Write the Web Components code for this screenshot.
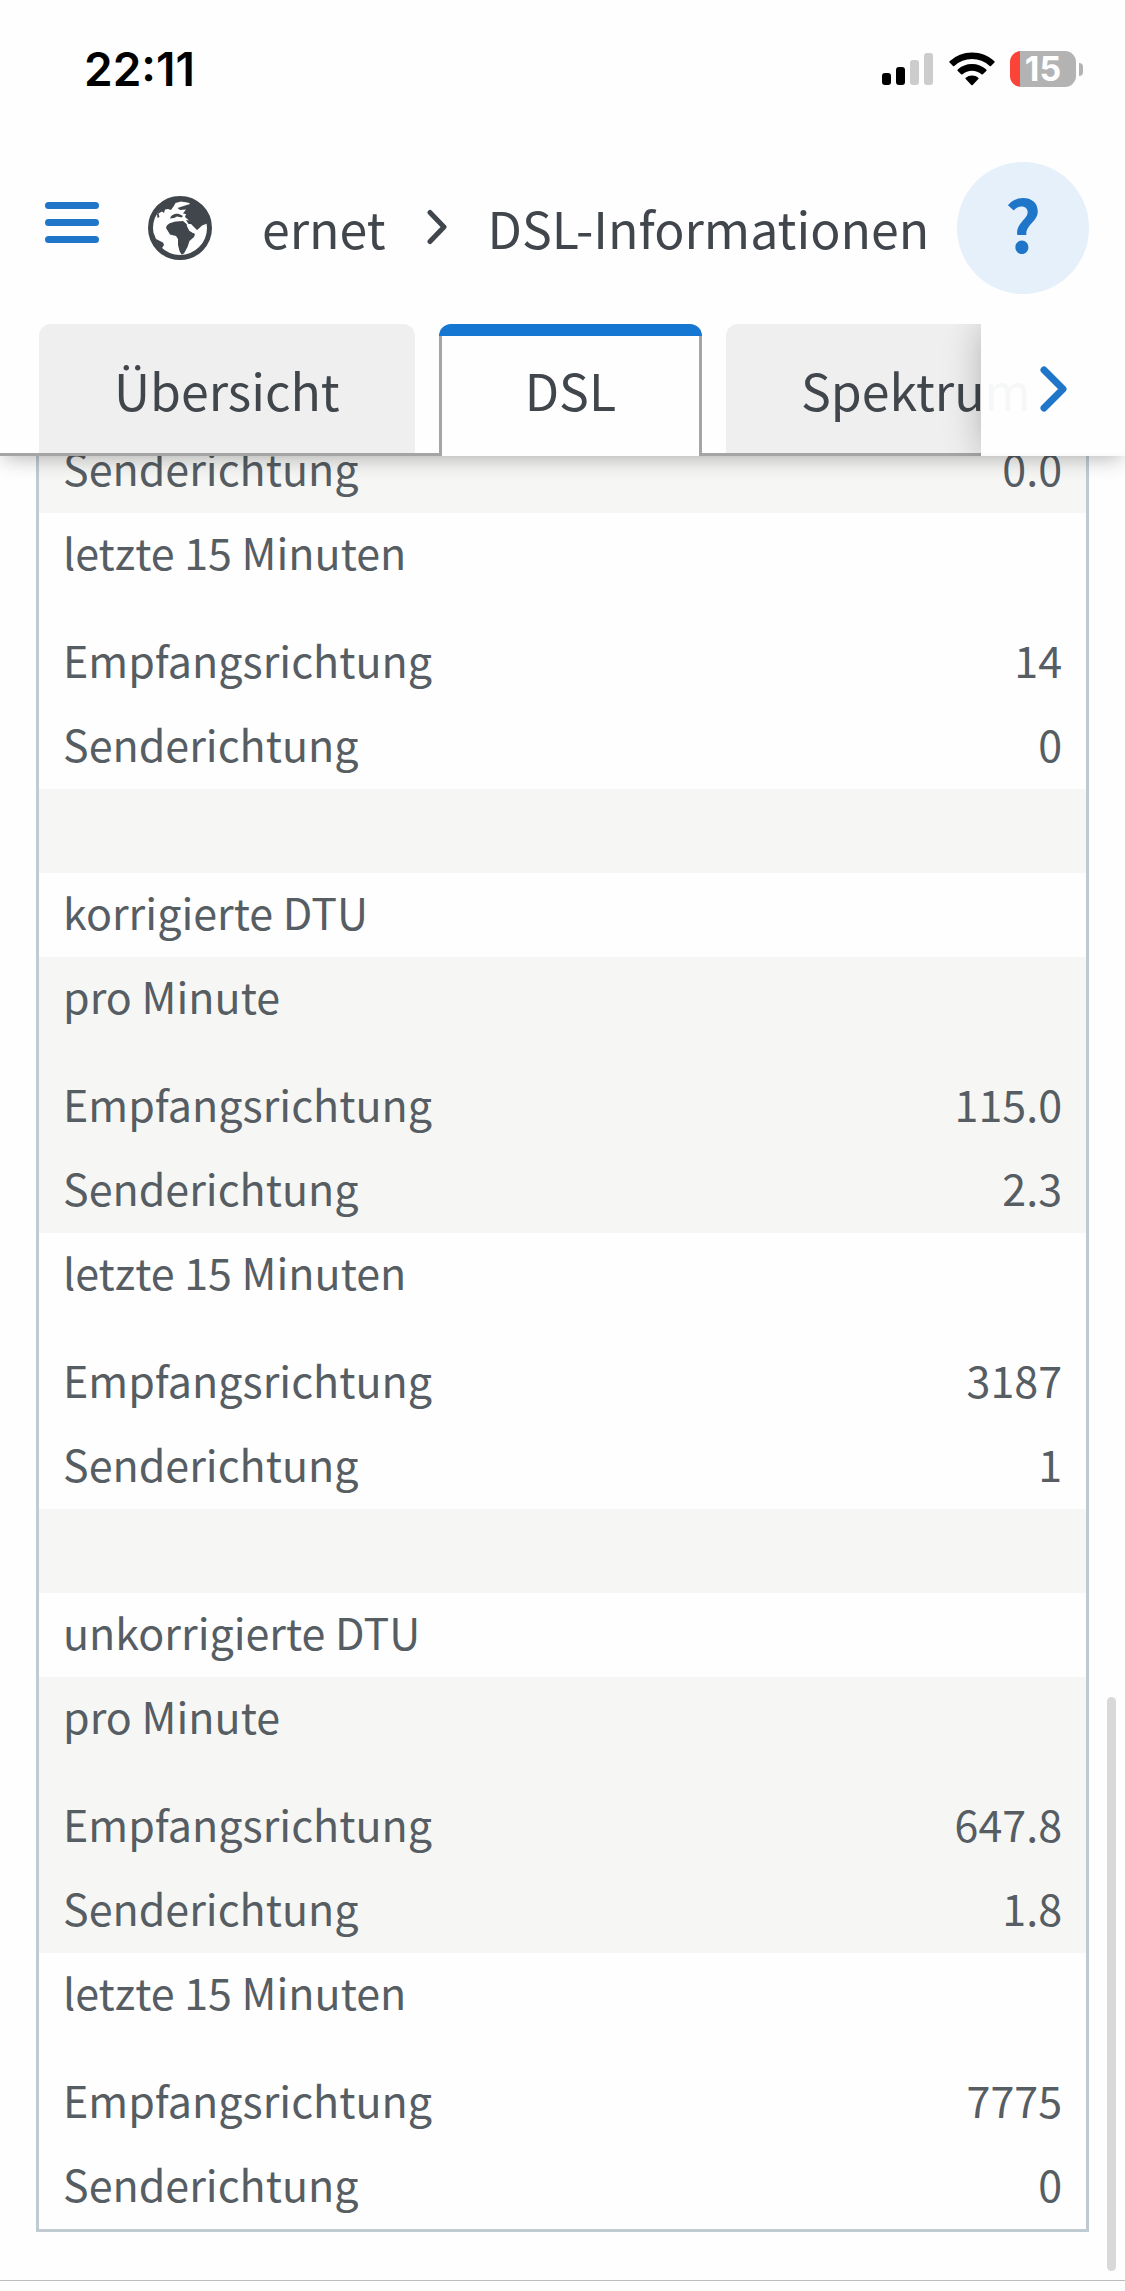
<!DOCTYPE html>
<html lang="de">
<head>
<meta charset="utf-8">
<meta name="viewport" content="width=device-width, initial-scale=1">
<title>DSL-Informationen</title>
<style>
  html, body { margin: 0; height: 100%; }
  body {
    background: #fefefe;
    font-family: "Noto Sans CJK SC", "Open Sans", sans-serif;
    --ink: #40464b;
    --ink-soft: #565d63;
    --blue: #1f76c9;
    --line: #a5a5a5;
    --frame: #c0cbd1;
    --stripe: #f6f7f5;
    --paper: #fefefe;
  }
</style>
</head>
<body>
<dsl-app></dsl-app>
<script>
const define = (name, html, setup) => {
  const template = document.createElement('template');
  template.innerHTML = html;
  customElements.define(name, class extends HTMLElement {
    constructor() {
      super();
      this.attachShadow({ mode: 'open' }).append(template.content.cloneNode(true));
    }
    connectedCallback() { if (setup) setup(this, this.shadowRoot); }
  });
};

define('status-bar', `
  <style>
    :host { display: flex; align-items: center; justify-content: space-between; height: 138px; padding: 0 42px 0 84px; color: #000; font-family: Inter, sans-serif; }
    time { font-size: 46px; line-height: 60px; font-weight: 600; }
    .icons { display: flex; align-items: center; gap: 15px; }
    svg { display: block; }
    .battery { display: flex; align-items: center; gap: 3px; }
    .cell { display: flex; align-items: center; justify-content: center; width: 66px; height: 36px; border-radius: 11px; background: linear-gradient(90deg, #fc4338 10px, #b3b3b3 10px); color: #fff; font-size: 34px; line-height: 36px; font-weight: 700; }
    .tip { width: 4px; height: 13px; border-radius: 0 4px 4px 0; background: #b3b3b3; }
  </style>
  <time>22:11</time>
  <div class="icons">
    <svg width="52" height="32" viewBox="0 0 52 32" aria-label="Mobilfunk">
      <rect x="0" y="20" width="9" height="12" rx="3"/>
      <rect x="14" y="14" width="9" height="18" rx="3"/>
      <rect x="28" y="7" width="9" height="25" rx="3" fill="#ccc"/>
      <rect x="42" y="0" width="9" height="32" rx="3" fill="#ccc"/>
    </svg>
    <svg width="46" height="34" viewBox="0 0 46 34" aria-label="WLAN">
      <path d="M23 0.5C31.600 0.500 39.500 3.700 45.400 9.200Q46 9.900 45.400 10.500L42 14Q41.300 14.500 40.700 14A26 26 0 0 0 5.300 14Q4.700 14.500 4 14L.6 10.500Q0 9.900 .6 9.200A33 33 0 0 1 23 .5Z"/>
      <path d="M23 12C28.500 12 33.500 14 37.300 17.500Q38 18.200 37.300 18.900L33.800 22.300Q33.200 22.900 32.500 22.300A14.500 14.500 0 0 0 13.500 22.300Q12.800 22.900 12.200 22.300L8.700 18.900Q8 18.200 8.700 17.500A21 21 0 0 1 23 12Z"/>
      <path d="M23 23.500C25.500 23.500 27.600 24.300 29.300 25.700Q30 26.400 29.300 27.100L23.700 32.900Q23 33.500 22.300 32.900L16.700 27.100Q16 26.400 16.700 25.700A10 10 0 0 1 23 23.500Z"/>
    </svg>
    <div class="battery"><div class="cell">15</div><div class="tip"></div></div>
  </div>
`);

define('app-nav', `
  <style>
    :host { display: flex; align-items: center; height: 132px; padding: 24px 36px 30px 45px; color: var(--ink); }
    button { border: 0; margin: 0; padding: 0; background: none; font: inherit; color: var(--blue); }
    svg { display: block; flex: none; }
    .menu { padding-bottom: 12px; margin-right: 49px; }
    ol { display: flex; align-items: center; gap: 40px; flex: 1; min-width: 0; margin: 0 0 0 50px; padding: 0 0 3px; list-style: none; font-size: 50px; line-height: 60px; white-space: nowrap; }
    li { display: flex; align-items: center; gap: 40px; }
    a { color: inherit; text-decoration: none; }
    .help { width: 132px; height: 132px; padding-bottom: 12px; flex: none; border-radius: 50%; background: #e5f0fa; font-size: 71px; line-height: 96px; font-weight: 700; }
  </style>
  <button class="menu" aria-label="Menü">
    <svg width="54" height="41" viewBox="0 0 54 41" stroke="currentColor" stroke-width="7" stroke-linecap="round"><path d="M3.500 3.500h47M3.500 20.500h47M3.500 37.500h47"/></svg>
  </button>
  <svg width="64" height="64" viewBox="0 0 64 64" aria-hidden="true">
    <circle cx="32" cy="32" r="29.500" fill="none" stroke="currentColor" stroke-width="5"/>
    <g fill="currentColor">
      <path d="M26 3C19 6 13 11 9 18L9.500 22 11.500 21 10.500 17.500 14 15.500 16 17 17 13.500 20 13 23 14 25.500 10.500 27.500 7 33 5.500 41 6.800 42 8 34 10.500 29.500 12 32 14 38 13.500 35 17.500 38 18 37 21 41 24.500 38 24 40.500 28 43 28 46 31 49 34 52 31.500 54 29.500 58 28 62 26C59 12 47 2 26 3Z"/>
      <path d="M22 22.500C23 18.500 28 17 31 18L35 20 33.500 21.500 29 20.500 26 22Z"/>
      <path d="M18 32C19 27 24 26.500 28 25.500L35 25 38 27.500 40 30 43 35.500 47 38 46 41 41.500 45 39.500 51 36 57.500 33.500 58.500 31.500 55 30 49 30 43 28 40 22 38.500Z"/>
      <path d="M3 34L6 38 8 43 15 46.500 16 49 14 52 13 56 7 50 2 40Z"/>
    </g>
    <path d="M39.500 29L42 34 46 36.500" fill="none" stroke="#fefefe" stroke-width="2"/>
  </svg>
  <ol>
    <li><a href="#internet">ernet</a>
      <svg width="22" height="36" viewBox="0 0 22 36" fill="none" stroke="currentColor" stroke-width="5" stroke-linecap="round" stroke-linejoin="round"><path d="M4 3.500 18 18 4 32.500"/></svg></li>
    <li><a href="#dsl" aria-current="page">DSL-Informationen</a></li>
  </ol>
  <button class="help" aria-label="Hilfe">?</button>
`);

define('tab-strip', `
  <style>
    :host { display: block; position: relative; overflow: hidden; }
    .strip { display: flex; gap: 24px; height: 132px; padding-left: 39px; background: linear-gradient(var(--line), var(--line)) left bottom / 100% 3px no-repeat; }
    .next { position: absolute; top: 0; right: 0; bottom: 0; width: 144px; border: 0; margin: 0; padding: 0 0 3px 2px; display: grid; place-items: center; background: rgba(254, 254, 254, .96); color: var(--blue); box-shadow: 0 0 36px -2px rgba(0, 0, 0, .28); }
  </style>
  <div class="strip" role="tablist"><slot></slot></div>
  <button class="next" aria-label="Weitere Reiter">
    <svg width="30" height="48" viewBox="0 0 30 48" fill="none" stroke="currentColor" stroke-width="7" stroke-linecap="round" stroke-linejoin="round"><path d="M5 5 24 24 5 43"/></svg>
  </button>
`);

define('tab-item', `
  <style>
    :host { display: flex; flex: none; }
    button { display: flex; align-items: center; margin: 0 0 3px; padding: 1px 75px 0; border: 0; border-radius: 12px 12px 0 0; background: #efefef; color: var(--ink); font: inherit; font-size: 50px; line-height: 60px; }
    :host([selected]) button { margin: 0; padding: 0 86px 2px; background: linear-gradient(#1677d2 12px, transparent 12px), linear-gradient(90deg, var(--line) 3px, var(--paper) 3px, var(--paper) calc(100% - 3px), var(--line) calc(100% - 3px)); }
  </style>
  <button role="tab"><slot></slot></button>
`, (host, root) => root.querySelector('button').setAttribute('aria-selected', host.hasAttribute('selected')));

const block = (title, down, up) => [['head', title], ['first', 'Empfangsrichtung', down], ['', 'Senderichtung', up]];
const sections = [
  { shade: true, rows: [['', 'Senderichtung', '0.0']] },
  { rows: block('letzte 15 Minuten', '14', '0') },
  { shade: true, rows: [['gap']] },
  { rows: [['head', 'korrigierte DTU']] },
  { shade: true, rows: block('pro Minute', '115.0', '2.3') },
  { rows: block('letzte 15 Minuten', '3187', '1') },
  { shade: true, rows: [['gap']] },
  { rows: [['head', 'unkorrigierte DTU']] },
  { shade: true, rows: block('pro Minute', '647.8', '1.8') },
  { rows: block('letzte 15 Minuten', '7775', '0') }
];

define('error-table', `
  <style>
    :host { display: block; flex: none; margin: 0 36px 48px; }
    table { width: 100%; box-sizing: border-box; border: 3px solid var(--frame); border-top: 0; border-spacing: 0; border-collapse: separate; color: var(--ink-soft); font-size: 43px; line-height: 52px; }
    .shade { background: var(--stripe); }
    th, td { padding: 12px 24px 20px; font-weight: 400; text-align: left; }
    td { text-align: right; }
    .first th, .first td { padding-top: 36px; }
    .gap td { height: 52px; }
  </style>
  <table></table>
`, (host, root) => {
  root.querySelector('table').innerHTML = sections.map(s =>
    `<tbody class="${s.shade ? 'shade' : ''}">` + s.rows.map(([kind, label, value]) =>
      kind === 'gap' ? '<tr class="gap"><td colspan="2"></td></tr>'
      : kind === 'head' ? `<tr><th colspan="2">${label}</th></tr>`
      : `<tr class="${kind}"><th scope="row">${label}</th><td>${value}</td></tr>`).join('') + '</tbody>').join('');
});

define('dsl-app', `
  <style>
    :host { display: flex; flex-direction: column; height: 100vh; }
    header { position: relative; z-index: 1; background: var(--paper); box-shadow: 0 6px 20px -4px rgba(0, 0, 0, .3); }
    main { position: relative; flex: 1; min-height: 0; display: flex; flex-direction: column; justify-content: flex-end; overflow: hidden; border-bottom: 1px solid #bdbdbd; }
    .thumb { position: absolute; right: 9px; bottom: 9px; width: 9px; height: 574px; border-radius: 5px; background: #d9d9d9; }
    footer { height: 10px; }
  </style>
  <header>
    <status-bar></status-bar>
    <app-nav></app-nav>
    <tab-strip>
      <tab-item>Übersicht</tab-item>
      <tab-item selected>DSL</tab-item>
      <tab-item>Spektrum</tab-item>
    </tab-strip>
  </header>
  <main>
    <error-table></error-table>
    <div class="thumb"></div>
  </main>
  <footer></footer>
`);
</script>
</body>
</html>
